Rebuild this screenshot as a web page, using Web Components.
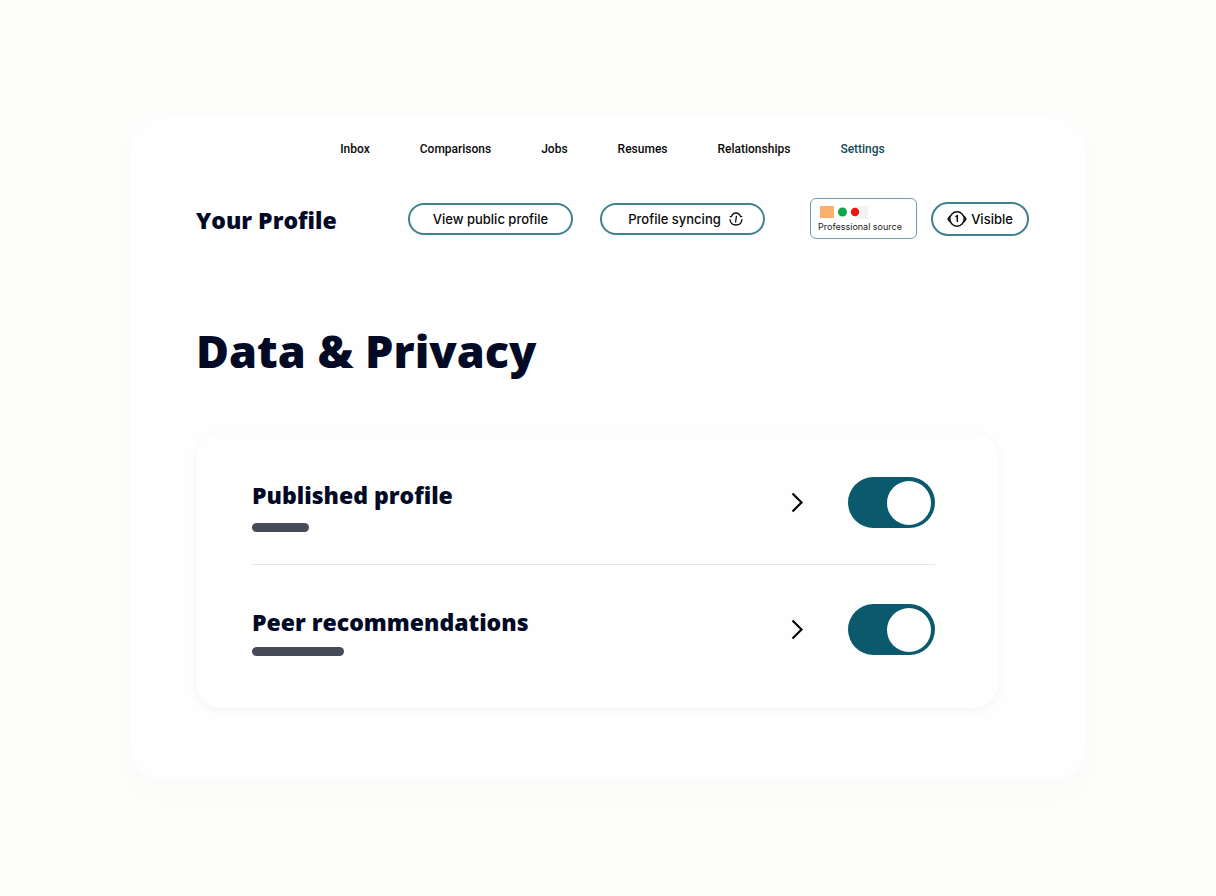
<!DOCTYPE html>
<html lang="en">
<head>
<meta charset="utf-8">
<meta name="viewport" content="width=device-width, initial-scale=1">
<title>Data &amp; Privacy</title>
<style>
  body { margin: 0; background: #fdfdfc; color: #000; font-family: Inter, "Liberation Sans", sans-serif;
    --heading: "Open Sans", "Noto Sans", sans-serif; }
</style>
</head>
<body>
<profile-panel>
  <profile-nav slot="nav">
    <a href="#inbox">Inbox</a>
    <a href="#comparisons">Comparisons</a>
    <a href="#jobs">Jobs</a>
    <a href="#resumes">Resumes</a>
    <a href="#relationships">Relationships</a>
    <a href="#settings" aria-current="page">Settings</a>
  </profile-nav>
  <profile-header>
    <span slot="title">Your Profile</span>
    <pill-button>View public profile</pill-button>
    <pill-button class="sync">Profile syncing
      <svg slot="after" width="14" height="14" viewBox="0 0 14 14" fill="none" stroke="#111" stroke-width="1.3" stroke-linecap="round" stroke-linejoin="round" aria-hidden="true"><path d="M1.200 4.600h1.200C3.300 2.300 4.800 1 7 1s3.700 1.300 4.600 3.600h1.200M1 7.600C1.500 11.300 4 13 7 13s5.500-1.700 6-5.400M7.400 4.300 6.600 9.800"/></svg>
    </pill-button>
    <source-badge slot="status">Professional source</source-badge>
    <pill-button slot="status" class="tall">
      <svg slot="before" width="20" height="18" viewBox="0 0 20 18" fill="none" stroke="#111" stroke-width="1.500" stroke-linecap="round" stroke-linejoin="round" aria-hidden="true"><circle cx="10" cy="9" r="7.200"/><path d="M2.800 6.500 1 9l1.800 2.500M17.200 6.500 19 9l-1.800 2.500M9 6.500 10.300 5.500V11.500"/></svg>
      Visible</pill-button>
  </profile-header>
  <section-title>Data &amp; Privacy</section-title>
  <settings-card>
    <setting-row class="first" label="Published profile" bar="short"></setting-row>
    <setting-row class="second" label="Peer recommendations" bar="long"></setting-row>
  </settings-card>
</profile-panel>

<script>
  const define = (name, html, setup) => {
    customElements.define(name, class extends HTMLElement {
      constructor() {
        super();
        const template = document.createElement('template');
        template.innerHTML = html;
        this.attachShadow({ mode: 'open' }).append(template.content.cloneNode(true));
      }
      connectedCallback() { if (setup) setup(this, this.shadowRoot); }
    });
  };

  define('profile-panel', `
    <style>
      :host { display: block; box-sizing: border-box; padding: 116px 131px; }
      main { padding: 24px 56px 72px 65px; background: #fefefe; border-radius: 32px;
        box-shadow: 0 12px 32px rgba(80, 80, 70, .025); }
    </style>
    <main><slot name="nav"></slot><slot></slot></main>`);

  define('profile-nav', `
    <style>
      :host { display: block; }
      nav { display: flex; justify-content: center; gap: 50px; }
      ::slotted(a) { font-family: Roboto, "Liberation Sans", sans-serif; font-size: 12px; font-weight: 500;
        line-height: 18px; color: #0a0a0a; text-decoration: none; }
      ::slotted(a[aria-current]) { color: #124a58; }
    </style>
    <nav aria-label="Main"><slot></slot></nav>`);

  define('profile-header', `
    <style>
      :host { display: flex; align-items: center; margin-top: 40px; }
      h2 { flex: 1; margin: 0; padding-top: 2px; color: #020a26; font-family: var(--heading); font-size: 23px; font-weight: 800; line-height: 28px; white-space: nowrap; }
      .actions { display: flex; gap: 27px; }
      .status { display: flex; align-items: center; gap: 14px; margin-left: 45px; }
    </style>
    <h2><slot name="title"></slot></h2>
    <div class="actions"><slot></slot></div>
    <div class="status"><slot name="status"></slot></div>`);

  define('pill-button', `
    <style>
      :host { display: block; }
      button { display: flex; align-items: center; justify-content: center; box-sizing: border-box; width: 165px;
        height: 32px; padding: 0; border: 2px solid #42808f; border-radius: 17px; background: #fff; color: #0a0a0a;
        font: 500 13px/18px Inter, "Liberation Sans", sans-serif; white-space: nowrap; cursor: pointer; }
      :host(.sync) button { padding-left: 6px; }
      :host(.tall) button { width: 98px; height: 34px; }
      ::slotted(svg) { display: block; flex: none; }
      ::slotted([slot="before"]) { margin-right: 4px; }
      ::slotted([slot="after"]) { margin-left: 8px; }
    </style>
    <button type="button"><slot name="before"></slot><span><slot></slot></span><slot name="after"></slot></button>`);

  define('source-badge', `
    <style>
      :host { display: block; box-sizing: border-box; width: 107px; height: 41px; padding: 7px 7px 0;
        border: 1px solid #6f9dac; border-radius: 6px; background: #fff; }
      svg { display: block; }
      span { display: block; margin-top: 2px; font-size: 9px; line-height: 12px; color: #222; white-space: nowrap; }
    </style>
    <svg width="50" height="13" viewBox="0 0 50 13" aria-hidden="true">
      <rect x="2" width="14" height="12" fill="#fbb16c"/><rect x="37" width="13" height="13" fill="#f2f3f3"/>
      <circle cx="24.500" cy="6" r="4.500" fill="#0aa847"/><circle cx="37" cy="6" r="4.200" fill="#ee1515"/>
    </svg>
    <span><slot></slot></span>`);

  define('section-title', `
    <style>
      :host { display: block; margin-top: 84px; }
      h1 { margin: 0; color: #020a26; font-family: var(--heading); font-size: 45px; font-weight: 800; line-height: 56px; }
    </style>
    <h1><slot></slot></h1>`);

  define('settings-card', `
    <style>
      :host { display: block; margin: 54px 31px 0 0; padding: 44px 63px 52px 56px; border-radius: 24px;
        background: #fefefe; box-shadow: 0 2px 8px rgba(0, 0, 0, .05); }
    </style>
    <slot></slot>`);

  define('setting-row', `
    <style>
      :host { display: flex; align-items: flex-start; }
      :host(.first) { padding-bottom: 32px; border-bottom: 1px solid #e6e6e8; }
      :host(.second) { padding-top: 39px; }
      .text { flex: 1; padding-top: 4px; }
      label { display: block; color: #020a26; font-family: var(--heading); font-size: 23px; font-weight: 800; line-height: 28px; }
      .bar { width: 57px; height: 9px; margin-top: 14px; border-radius: 5px; background: #474a57; }
      :host([bar="long"]) .bar { width: 92px; margin-top: 11px; }
      button { width: 24px; height: 51px; margin-right: 39px; padding: 0; border: 0; background: none; cursor: pointer; }
      svg { display: block; margin: auto; }
      input { appearance: none; display: flex; flex: none; align-items: center; justify-content: flex-end;
        box-sizing: border-box; width: 87px; height: 51px; margin: 0; padding: 0 4px; border-radius: 26px;
        background: #b8c2c6; cursor: pointer; }
      input::before { content: ""; width: 44px; height: 44px; border-radius: 50%; background: #fefefe; }
      input:checked { background: #0a596d; }
      input:not(:checked) { justify-content: flex-start; }
    </style>
    <div class="text"><label for="toggle"></label><div class="bar"></div></div>
    <button type="button">
      <svg width="24" height="24" viewBox="0 0 24 24" fill="none" stroke="#080808" stroke-width="2.200" aria-hidden="true"><path d="m7.500 2.500 9 9-9 9"/></svg>
    </button>
    <input id="toggle" type="checkbox" role="switch" checked>`,
    (host, root) => {
      root.querySelector('label').textContent = host.getAttribute('label');
      root.querySelector('button').setAttribute('aria-label', 'Open ' + host.getAttribute('label'));
    });
</script>
</body>
</html>
